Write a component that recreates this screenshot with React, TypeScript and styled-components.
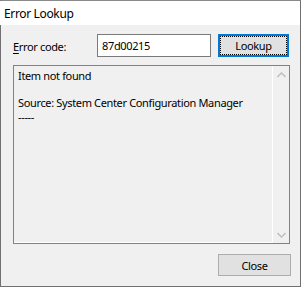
import styled, { createGlobalStyle } from "styled-components";

const GlobalStyle = createGlobalStyle`
  html, body {
    margin: 0;
    padding: 0;
    background: #ffffff;
  }
  body {
    font-family: "Noto Sans", "Open Sans", sans-serif;
    letter-spacing: -0.35px;
  }
`;

function ChevronUp() {
  return (
    <svg width="9" height="6" viewBox="0 0 9 6">
      <path d="M0.5 5 L4.5 1 L8.5 5" fill="none" stroke="#c2c2c2" strokeWidth="1.6" />
    </svg>
  );
}

function ChevronDown() {
  return (
    <svg width="9" height="6" viewBox="0 0 9 6">
      <path d="M0.5 1 L4.5 5 L8.5 1" fill="none" stroke="#c2c2c2" strokeWidth="1.6" />
    </svg>
  );
}

function App() {
  return (
    <>
      <GlobalStyle />
      <Window>
        <TitleBar>Error Lookup</TitleBar>
        <Body>
          <LookupRow>
            <Label>
              <u>E</u>rror code:
            </Label>
            <CodeInput defaultValue="87d00215" />
            <Button $focused>Lookup</Button>
          </LookupRow>
          <ResultBox>
            <ResultText>
              <Line>Item not found</Line>
              <Line>&nbsp;</Line>
              <Line>Source: System Center Configuration Manager</Line>
              <Line>-----</Line>
            </ResultText>
            <ScrollBar>
              <ScrollArrow>
                <ChevronUp />
              </ScrollArrow>
              <ScrollArrow>
                <ChevronDown />
              </ScrollArrow>
            </ScrollBar>
          </ResultBox>
          <Footer>
            <Button>Close</Button>
          </Footer>
        </Body>
      </Window>
    </>
  );
}

export default App;

const Window = styled.div`
  display: flex;
  flex-direction: column;
  box-sizing: border-box;

  width: 301px;
  height: 287px;

  background-color: #f0f0f0;
  border: 1px solid #707070;
  border-top-color: #8a8a8a;
`;

const TitleBar = styled.div`
  height: 24px;
  padding-left: 4px;

  display: flex;
  align-items: center;

  background-color: #ffffff;
  color: #000000;
  font-size: 12px;
  margin-left: -1px;
`;

const Body = styled.div`
  flex: 1;
  display: flex;
  flex-direction: column;

  padding: 9px 10px 0 12px;
`;

const LookupRow = styled.div`
  display: flex;
  align-items: center;
  height: 23px;
`;

const Label = styled.div`
  width: 84px;
  font-size: 11px;
  color: #000000;
  padding-top: 2px;

  u {
    text-decoration-thickness: 1px;
    text-underline-offset: 2px;
  }
`;

const CodeInput = styled.input`
  box-sizing: border-box;
  width: 114px;
  height: 23px;
  margin: 0 7px 0 0;
  padding: 0 4px;

  border: 1px solid #7a7a7a;
  background: #ffffff;
  font-family: "Noto Sans", "Open Sans", sans-serif;
  letter-spacing: -0.35px;
  font-size: 11px;
  color: #000000;
  outline: none;
`;

const Button = styled.button<{ $focused?: boolean }>`
  position: relative;
  box-sizing: border-box;
  width: ${({ $focused }) => ($focused ? "71px" : "73px")};
  height: ${({ $focused }) => ($focused ? "23px" : "22px")};
  margin: 0;
  padding: 0;

  background-color: #e1e1e1;
  border: ${({ $focused }) => ($focused ? "2px solid #0078d7" : "1px solid #adadad")};
  font-family: "Noto Sans", "Open Sans", sans-serif;
  letter-spacing: -0.35px;
  font-size: 11px;
  color: #000000;

  &::after {
    content: "";
    display: ${({ $focused }) => ($focused ? "block" : "none")};
    position: absolute;
    inset: 0;
    border: 1px dotted #000000;
  }
`;

const ResultBox = styled.div`
  display: flex;
  box-sizing: border-box;
  width: 277px;
  height: 179px;
  margin-top: 8px;

  border: 1px solid #828282;
  box-shadow: inset -1px -1px 0 #ffffff;
  background-color: #f0f0f0;
`;

const ResultText = styled.div`
  flex: 1;
  padding: 3px 4px;
  font-size: 11px;
  line-height: 13.5px;
  color: #000000;
`;

const Line = styled.div`
  white-space: nowrap;
`;

const ScrollBar = styled.div`
  width: 16px;
  display: flex;
  flex-direction: column;
  justify-content: space-between;

  border-left: 1px solid #ffffff;
  background-color: #f0f0f0;
`;

const ScrollArrow = styled.div`
  height: 17px;
  display: flex;
  align-items: center;
  justify-content: center;
`;

const Footer = styled.div`
  display: flex;
  justify-content: flex-end;
  margin-top: 10px;
  margin-right: -1px;
`;
